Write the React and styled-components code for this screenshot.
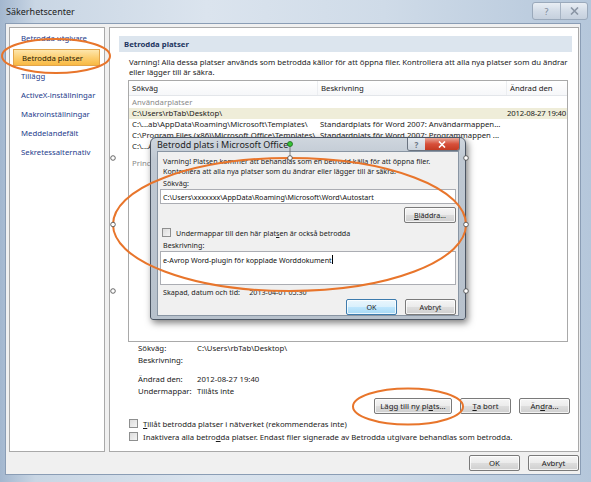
import React from 'react';
import styled, { createGlobalStyle, css } from 'styled-components';

const Global = createGlobalStyle`
  html, body { margin: 0; padding: 0; background: #ffffff; }
  body { font-family: "Noto Sans", "Open Sans", sans-serif; }
  #root { width: 591px; height: 482px; }
`;

const FONT = `"Noto Sans", "Open Sans", "DejaVu Sans", sans-serif`;

const Window = styled.div`
  position: relative;
  width: 591px;
  height: 482px;
  overflow: hidden;
  box-sizing: border-box;
  display: flex;
  flex-direction: column;
  padding: 0 10px 7px 5px;
  background: linear-gradient(90deg, #a3b7cf 0%, #c9d6e4 6%, #dbe4ee 35%, #cfdbe8 65%, #b5c7db 100%);
  font-family: ${FONT};
  font-size: 7.75px;
  color: #1b1b1b;
`;

const TitleBar = styled.div`
  height: 23px;
  display: flex;
  align-items: center;
  justify-content: space-between;
  padding-left: 1px;
`;

const TitleText = styled.div`
  font-size: 9px;
  color: #1c1c1c;
  padding-bottom: 1px;
`;

const CaptionGroup = styled.div`
  display: flex;
  align-self: flex-start;
  margin-top: 2px;
  margin-right: -7px;
  height: 16px;
  border: 1px solid #9aa9bb;
  border-radius: 3px;
  background: linear-gradient(180deg, #e9eef4 0%, #d3dce7 50%, #c5d0dd 100%);
  overflow: hidden;
`;

const CaptionBtn = styled.div`
  width: ${p => p.$w}px;
  display: flex;
  align-items: center;
  justify-content: center;
  color: #7d8898;
  font-size: 9px;
  & + & { border-left: 1px solid #a6b3c3; }
`;

const Client = styled.div`
  flex: 1;
  background: #f0f0f0;
  border: 1px solid #8a9db5;
  display: flex;
  flex-direction: column;
  padding: 3px 1px 0 3px;
  min-height: 0;
  min-width: 0;
`;

const MainRow = styled.div`
  flex: 1;
  display: grid;
  grid-template-columns: 96px minmax(0, 1fr);
  gap: 4px;
  min-height: 0;
`;

const Panel = styled.div`
  background: #ffffff;
  border: 1px solid #a9a9a9;
  box-sizing: border-box;
  min-width: 0;
  overflow: hidden;
`;

const Nav = styled(Panel)`
  padding: 0 3px;
  display: flex;
  flex-direction: column;
`;

const NavItem = styled.div`
  height: 19px;
  display: flex;
  align-items: center;
  padding-left: 8px;
  color: #1e3c8c;
  white-space: nowrap;
  box-sizing: border-box;
  ${p => p.$active && css`
    color: #2b1d05;
    margin: 2px 1px 0 0;
    height: 17px;
    border: 1px solid #e2a54a;
    background: linear-gradient(180deg, #fde6ad 0%, #fccf72 50%, #f8b943 100%);
  `}
`;

const Content = styled(Panel)`
  padding: 8px 6px 8px 9px;
  display: flex;
  flex-direction: column;
`;

const SectionHeader = styled.div`
  height: 16px;
  display: flex;
  align-items: center;
  padding-left: 5px;
  background: #dce5ee;
  color: #1d3560;
  font-weight: bold;
`;

const Para = styled.div`
  padding-left: 10px;
  margin-top: 5px;
  line-height: 10px;
  color: #1b1b1b;
  white-space: nowrap;
`;

const Table = styled.div`
  margin: 3px 4px 0 9px;
  height: 264px;
  border: 1px solid #a9a9a9;
  box-sizing: border-box;
  overflow: hidden;
  display: flex;
  flex-direction: column;
`;

const Row = styled.div`
  display: grid;
  grid-template-columns: 188px 189px minmax(0, 1fr);
  height: ${p => p.$h || 11}px;
  align-items: center;
  white-space: nowrap;
  overflow: hidden;
  background: ${p => (p.$sel ? '#efedd9' : 'transparent')};
  & > span { padding-left: 3px; overflow: hidden; }
`;

const DateCell = styled.span`
  && { padding-left: 1px; overflow: visible; letter-spacing: -0.2px; }
`;

const HeadRow = styled(Row)`
  height: 14px;
  background: linear-gradient(180deg, #ffffff 0%, #f6f7f9 100%);
  border-bottom: 1px solid #e3e6ea;
  & > span + span { border-left: 1px solid #eceef1; }
  & > span { padding-left: 3px; height: 14px; display: flex; align-items: center; }
`;

const GroupRow = styled.div`
  height: 11px;
  margin-top: ${p => p.$mt || 0}px;
  display: flex;
  align-items: center;
  padding-left: 3px;
  color: #8a8a8a;
`;

const Details = styled.div`
  display: grid;
  grid-template-columns: 59px 1fr;
  padding-left: 19px;
  margin-top: 1px;
  line-height: 11.5px;
  color: #222;
`;

const Spacer = styled.div`
  height: ${p => p.$h}px;
  grid-column: 1 / -1;
`;

const ButtonRow = styled.div`
  display: flex;
  justify-content: flex-end;
  gap: 8px;
  margin-right: ${p => p.$mr ?? 2}px;
  margin-top: ${p => p.$mt || 0}px;
`;

const Button = styled.div`
  width: ${p => p.$w || 51}px;
  height: 16px;
  box-sizing: border-box;
  border: 1px solid ${p => (p.$def ? '#3d7bad' : '#7a7a7a')};
  border-radius: 2px;
  background: ${p => (p.$def
    ? 'linear-gradient(180deg, #eaf6fd 0%, #d9f0fc 50%, #bee6fd 51%, #a7d9f5 100%)'
    : 'linear-gradient(180deg, #f5f5f5 0%, #ebebeb 50%, #dddddd 51%, #cfcfcf 100%)')};
  box-shadow: inset 0 0 0 1px rgba(255,255,255,0.75);
  display: flex;
  align-items: center;
  justify-content: center;
  color: #1b1b1b;
  white-space: nowrap;
`;

const CheckRow = styled.label`
  display: flex;
  align-items: center;
  gap: 5px;
  height: 13px;
  margin-left: ${p => p.$ml || 10}px;
  margin-top: ${p => p.$mt || 0}px;
  white-space: nowrap;
  color: #1b1b1b;
`;

const Box = styled.span`
  width: 9px;
  height: 9px;
  box-sizing: border-box;
  border: 1px solid #8e8f8f;
  background: linear-gradient(135deg, #dcdcdc 0%, #f4f4f4 100%);
  flex: none;
`;

const Footer = styled.div`
  height: 22px;
  display: flex;
  justify-content: flex-end;
  align-items: flex-start;
  padding-top: 3px;
  box-sizing: border-box;
  gap: 8px;
`;

/* ---------- Overlay dialog ---------- */

const Dialog = styled.div`
  position: absolute;
  left: 150px;
  top: 137px;
  width: 316px;
  height: 183px;
  box-sizing: border-box;
  border: 1px solid #4b5563;
  border-radius: 6px 6px 3px 3px;
  background: linear-gradient(180deg, #cfd6de 0%, #bfc8d2 12%, #b7c1cc 100%);
  box-shadow: 2px 3px 7px rgba(0,0,0,0.5);
  display: flex;
  flex-direction: column;
  padding: 0 6px 6px 6px;
`;

const DlgTitle = styled.div`
  height: 18px;
  display: flex;
  align-items: center;
  justify-content: space-between;
  font-size: 9px;
  color: #1e1e1e;
`;

const DlgCaption = styled.div`
  display: flex;
  align-self: flex-start;
  margin-right: -1px;
  height: 12px;
  border: 1px solid #6a7380;
  border-top: none;
  border-radius: 0 0 3px 3px;
  overflow: hidden;
`;

const DlgBtn = styled.div`
  width: ${p => p.$w}px;
  display: flex;
  align-items: center;
  justify-content: center;
  font-size: 8px;
  font-weight: bold;
  color: ${p => (p.$red ? '#ffffff' : '#6b7685')};
  background: ${p => (p.$red
    ? 'linear-gradient(180deg, #e9a99b 0%, #d7503b 50%, #c43a22 100%)'
    : 'linear-gradient(180deg, #e5eaf0 0%, #cbd3dc 100%)')};
`;

const DlgBody = styled.div`
  flex: 1;
  background: #f0f0f0;
  border: 1px solid #8995a3;
  padding: 4px 2px 0 2px;
  display: flex;
  flex-direction: column;
  font-size: 7.15px;
`;

const DlgText = styled.div`
  line-height: 10px;
  padding-left: 3px;
  white-space: nowrap;
  margin-top: ${p => p.$mt || 0}px;
`;

const Input = styled.div`
  height: ${p => p.$h || 15}px;
  border: 1px solid #abadb3;
  background: #ffffff;
  box-sizing: border-box;
  padding: ${p => (p.$top ? '3px 2px 0' : '0 2px')};
  display: flex;
  align-items: ${p => (p.$top ? 'flex-start' : 'center')};
  margin-top: 1px;
  white-space: nowrap;
  color: #111;
`;

const Caret = styled.span`
  display: inline-block;
  width: 1px;
  height: 9px;
  background: #000;
  vertical-align: -2px;
`;

const Overlay = styled.svg`
  position: absolute;
  left: 0;
  top: 0;
  pointer-events: none;
`;

const U = styled.span`
  text-decoration: underline;
`;

const Handle = ({ x, y }) => (
  <circle cx={x} cy={y} r="2.3" fill="#ffffff" stroke="#444" strokeWidth="0.8" />
);

export default function App() {
  return (
    <>
      <Global />
      <Window>
        <TitleBar>
          <TitleText>Säkerhetscenter</TitleText>
          <CaptionGroup>
            <CaptionBtn $w={27}>?</CaptionBtn>
            <CaptionBtn $w={26}>
              <svg width="9" height="8" viewBox="0 0 9 8">
                <path d="M1 0.5 L8 7.5 M8 0.5 L1 7.5" stroke="#8a95a4" strokeWidth="1.6" />
              </svg>
            </CaptionBtn>
          </CaptionGroup>
        </TitleBar>
        <Client>
          <MainRow>
            <Nav>
              <NavItem>Betrodda utgivare</NavItem>
              <NavItem $active>Betrodda platser</NavItem>
              <NavItem>Tillägg</NavItem>
              <NavItem>ActiveX-inställningar</NavItem>
              <NavItem>Makroinställningar</NavItem>
              <NavItem>Meddelandefält</NavItem>
              <NavItem>Sekretessalternativ</NavItem>
            </Nav>
            <Content>
              <SectionHeader>Betrodda platser</SectionHeader>
              <Para>
                Varning! Alla dessa platser används som betrodda källor för att öppna filer. Kontrollera att alla nya platser som du ändrar
                <br />
                eller lägger till är säkra.
              </Para>
              <Table>
                <HeadRow>
                  <span>Sökväg</span>
                  <span>Beskrivning</span>
                  <span>Ändrad den</span>
                </HeadRow>
                <GroupRow $mt={1}>Användarplatser</GroupRow>
                <Row $sel>
                  <span>C:\Users\rbTab\Desktop\</span>
                  <span></span>
                  <DateCell>2012-08-27 19:40</DateCell>
                </Row>
                <Row>
                  <span>C:\...ab\AppData\Roaming\Microsoft\Templates\</span>
                  <span>Standardplats för Word 2007: Användarmappen...</span>
                  <span></span>
                </Row>
                <Row>
                  <span>C:\Program Files (x86)\Microsoft Office\Templates\</span>
                  <span>Standardplats för Word 2007: Programmappen ...</span>
                  <span></span>
                </Row>
                <Row>
                  <span>C:\...AppData\Roaming\Microsoft\Word\Startup\</span>
                  <span>Word 2007 standardplats: Start</span>
                  <span></span>
                </Row>
                <GroupRow $mt={6}>Principplatser</GroupRow>
              </Table>
              <Details>
                <span>Sökväg:</span>
                <span>C:\Users\rbTab\Desktop\</span>
                <span>Beskrivning:</span>
                <span></span>
                <Spacer $h={8} />
                <span>Ändrad den:</span>
                <span>2012-08-27 19:40</span>
                <span>Undermappar:</span>
                <span>Tillåts inte</span>
              </Details>
              <ButtonRow $mt={1} $mr={2}>
                <Button $w={78}>Lägg till ny pl<U>a</U>ts...</Button>
                <Button><U>T</U>a bort</Button>
                <Button>Än<U>d</U>ra...</Button>
              </ButtonRow>
              <CheckRow $ml={10} $mt={3}>
                <Box />
                <span><U>T</U>illåt betrodda platser i nätverket (rekommenderas inte)</span>
              </CheckRow>
              <CheckRow $ml={10}>
                <Box />
                <span>Inaktivera alla betro<U>d</U>da platser. Endast filer signerade av Betrodda utgivare behandlas som betrodda.</span>
              </CheckRow>
            </Content>
          </MainRow>
          <Footer>
            <Button>OK</Button>
            <Button>Avbryt</Button>
          </Footer>
        </Client>

        <Dialog>
          <DlgTitle>
            <span>Betrodd plats i Microsoft Office</span>
            <DlgCaption>
              <DlgBtn $w={17}>?</DlgBtn>
              <DlgBtn $w={34} $red>
                <svg width="8" height="7" viewBox="0 0 8 7">
                  <path d="M1 0.5 L7 6.5 M7 0.5 L1 6.5" stroke="#ffffff" strokeWidth="1.6" />
                </svg>
              </DlgBtn>
            </DlgCaption>
          </DlgTitle>
          <DlgBody>
            <DlgText>
              Varning! Platsen kommer att behandlas som en betrodd källa för att öppna filer.
              <br />
              Kontrollera att alla nya platser som du ändrar eller lägger till är säkra.
            </DlgText>
            <DlgText $mt={2}>Sökväg:</DlgText>
            <Input>C:\Users\xxxxxxx\AppData\Roaming\Microsoft\Word\Autostart</Input>
            <ButtonRow $mt={3} $mr={0}>
              <Button $w={52}><U>B</U>läddra...</Button>
            </ButtonRow>
            <CheckRow $ml={2} $mt={3}>
              <Box />
              <span>Undermappar till den här plat<U>s</U>en är också betrodda</span>
            </CheckRow>
            <DlgText $mt={1}>Beskrivning:</DlgText>
            <Input $h={34} $top>e-Avrop Word-plugin för kopplade Worddokument<Caret /></Input>
            <DlgText $mt={2}>Skapad, datum och tid:&nbsp;&nbsp;&nbsp;&nbsp; 2013-04-01 05:30</DlgText>
            <ButtonRow $mt={2} $mr={0}>
              <Button $def>OK</Button>
              <Button>Avbryt</Button>
            </ButtonRow>
          </DlgBody>
        </Dialog>

        <Overlay width="591" height="482" viewBox="0 0 591 482">
          <ellipse cx="56" cy="56" rx="54" ry="17" fill="none" stroke="#e8752b" strokeWidth="2" />
          <ellipse cx="289.5" cy="224.5" rx="176.5" ry="66.5" fill="none" stroke="#e8752b" strokeWidth="2" />
          <ellipse cx="408" cy="406.5" rx="55" ry="18" fill="none" stroke="#e8752b" strokeWidth="2" />
          <line x1="290" y1="145" x2="290" y2="158" stroke="#666" strokeWidth="0.8" />
          <circle cx="290" cy="144" r="2.5" fill="#36c436" stroke="#1d6b1d" strokeWidth="0.8" />
          <Handle x={113} y={158} />
          <Handle x={113} y={224.5} />
          <Handle x={113} y={291} />
          <Handle x={466} y={158} />
          <Handle x={466} y={224.5} />
          <Handle x={466} y={291} />
          <Handle x={290} y={158} />
        </Overlay>
      </Window>
    </>
  );
}
